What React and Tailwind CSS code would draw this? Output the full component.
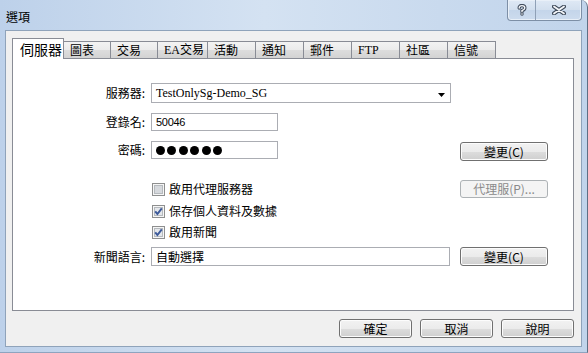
import React from "react";

const CJK = '"Noto Sans CJK TC", "Noto Sans", sans-serif';
const SERIF = '"Liberation Serif", "Noto Sans CJK TC", serif';

function Btn({ children, disabled, className = "" }) {
  return (
    <div
      className={`flex items-center justify-center rounded-[3px] border text-[12px] leading-none ${
        disabled
          ? "border-[#adb2b5] bg-[#f4f4f4] text-[#8a8a8a]"
          : "border-[#707070] bg-[linear-gradient(to_bottom,#f2f2f2_0%,#ebebeb_50%,#dddddd_51%,#cfcfcf_100%)] text-black shadow-[inset_0_0_0_1px_#fcfcfc]"
      } ${className}`}
    >
      {children}
    </div>
  );
}

function Check({ checked }) {
  return (
    <svg width="13" height="13" viewBox="0 0 13 13" className="shrink-0">
      <rect x="0.5" y="0.5" width="12" height="12" fill="#f6f6f6" stroke="#8e8f8f" />
      <rect x="2.5" y="2.5" width="8" height="8" fill={checked ? "#e4e7eb" : "#d6d9dd"} stroke="#b6babe" />
      {checked && (
        <path d="M3.2 6.4 L5.4 9 L9.8 3.4" fill="none" stroke="#3d5a9a" strokeWidth="2" strokeLinejoin="miter" />
      )}
    </svg>
  );
}

function Tab({ label, w, serif }) {
  return (
    <div
      className={`-ml-px mb-px flex h-[17px] items-center border border-b-0 border-[#898c95] bg-[linear-gradient(to_bottom,#f3f3f3_0%,#ebebeb_50%,#dddddd_51%,#d3d3d3_100%)] pl-[6px] text-[12px] leading-none text-black ${w}`}
      style={{ fontFamily: serif ? SERIF : CJK }}
    >
      {label}
    </div>
  );
}

export default function App() {
  return (
    <div
      className="relative flex h-[353px] w-[588px] flex-col overflow-hidden rounded-tr-[7px] border-r border-b border-r-[#5f6f84] border-b-[#8ea4bf] bg-[linear-gradient(to_right,#bdd1ea_0%,#d4e2f2_45%,#c9daee_75%,#c1d4eb_100%)]"
      style={{ fontFamily: CJK }}
    >
      {/* title bar */}
      <div className="flex h-[30px] items-center pl-[6px] pt-[4px] text-[12px] text-black">選項</div>

      {/* caption buttons */}
      <div className="absolute right-[5px] top-0 flex h-[21px] w-[75px] overflow-hidden rounded-b-[4px] border border-t-0 border-[#7d8fa6] bg-[linear-gradient(to_bottom,#dfe9f5_0%,#d2dfee_50%,#c4d5ea_51%,#cddcee_100%)] shadow-[inset_0_0_0_1px_#e9f0f8]">
        <div className="flex w-[28px] items-center justify-center border-r border-[#8fa0b6]">
          <svg width="10" height="12" viewBox="0 0 10 12">
            <path d="M2.2 4 Q2.2 1.6 5 1.6 Q7.8 1.6 7.8 4 Q7.8 5.6 5 6.6 L5 7.8" fill="none" stroke="#3e4a5a" strokeWidth="3.4" strokeLinecap="round" />
            <circle cx="5" cy="10" r="1.7" fill="#3e4a5a" />
            <path d="M2.2 4 Q2.2 1.6 5 1.6 Q7.8 1.6 7.8 4 Q7.8 5.6 5 6.6 L5 7.8" fill="none" stroke="#f4f6f9" strokeWidth="1.4" strokeLinecap="round" />
            <circle cx="5" cy="10" r="0.8" fill="#f4f6f9" />
          </svg>
        </div>
        <div className="flex flex-1 items-center justify-center">
          <svg width="14" height="10" viewBox="0 0 14 10">
            <path d="M2 1.5 L12 8.5 M12 1.5 L2 8.5" fill="none" stroke="#3e4a5a" strokeWidth="4" strokeLinecap="round" />
            <path d="M2 1.5 L12 8.5 M12 1.5 L2 8.5" fill="none" stroke="#f4f6f9" strokeWidth="1.8" strokeLinecap="round" />
          </svg>
        </div>
      </div>

      {/* client area */}
      <div className="ml-[5px] mr-[5px] flex h-[317px] flex-col border border-[#8fa3ba] bg-[#f0f0f0] pl-[6px] pr-[7px] pt-[7px]">
        {/* tabs */}
        <div className="relative z-10 -mb-px flex h-[21px] items-end">
          <div className="z-20 flex h-[21px] w-[52px] items-center border border-b-0 border-[#898c95] bg-white pb-[1px] pl-[7px] text-[14px] leading-none text-black">
            伺服器
          </div>
          <Tab label="圖表" w="w-[48px]" />
          <Tab label="交易" w="w-[48px]" />
          <Tab label="EA交易" w="w-[51px]" serif />
          <Tab label="活動" w="w-[49px]" />
          <Tab label="通知" w="w-[49px]" />
          <Tab label="郵件" w="w-[49px]" />
          <Tab label="FTP" w="w-[49px]" serif />
          <Tab label="社區" w="w-[49px]" />
          <Tab label="信號" w="w-[49px]" />
        </div>

        {/* panel */}
        <div className="flex h-[253px] flex-col border border-[#898c95] bg-white text-[12px] text-black">
          {/* server */}
          <div className="mt-[24px] flex h-[20px] items-center">
            <div className="w-[138px] pr-[6px] text-right">服務器:</div>
            <div className="relative flex h-[20px] w-[300px] items-center border border-[#abadb3] bg-white pl-[4px]">
              <span className="text-[12px]" style={{ fontFamily: SERIF }}>TestOnlySg-Demo_SG</span>
              <svg width="7" height="4" viewBox="0 0 7 4" className="absolute right-[5px] top-[9px]">
                <path d="M0 0 L7 0 L3.5 4 Z" fill="#000" />
              </svg>
            </div>
          </div>

          {/* login */}
          <div className="mt-[10px] flex h-[18px] items-center">
            <div className="w-[138px] pr-[6px] text-right">登錄名:</div>
            <div className="flex h-[18px] w-[127px] items-center border border-[#abadb3] bg-white pl-[4px]">
              <span className="text-[11px] tracking-[-0.3px]" style={{ fontFamily: '"Liberation Sans", sans-serif' }}>50046</span>
            </div>
          </div>

          {/* password */}
          <div className="mt-[10px] flex h-[20px] items-start">
            <div className="flex h-[18px] w-[138px] items-center justify-end pr-[6px]">密碼:</div>
            <div className="w-[309px]">
              <div className="flex h-[18px] w-[127px] items-center gap-[2.4px] border border-[#abadb3] bg-white pl-[4px]">
                <span className="h-[9px] w-[9px] rounded-full bg-black" />
                <span className="h-[9px] w-[9px] rounded-full bg-black" />
                <span className="h-[9px] w-[9px] rounded-full bg-black" />
                <span className="h-[9px] w-[9px] rounded-full bg-black" />
                <span className="h-[9px] w-[9px] rounded-full bg-black" />
                <span className="h-[9px] w-[9px] rounded-full bg-black" />
              </div>
            </div>
            <Btn className="mt-px h-[19px] w-[88px]">變更(C)</Btn>
          </div>

          {/* proxy */}
          <div className="mt-[19px] flex h-[18px] items-center">
            <div className="w-[138px]" />
            <div className="flex w-[309px] items-center gap-[4px] pl-px">
              <Check />
              <span>啟用代理服務器</span>
            </div>
            <Btn disabled className="h-[18px] w-[88px]">代理服(P)...</Btn>
          </div>

          <div className="mt-[5px] flex h-[16px] items-center">
            <div className="w-[138px]" />
            <div className="flex items-center gap-[4px] pl-px">
              <Check checked />
              <span>保存個人資料及數據</span>
            </div>
          </div>

          <div className="mt-[5px] flex h-[16px] items-center">
            <div className="w-[138px]" />
            <div className="flex items-center gap-[4px] pl-px">
              <Check checked />
              <span>啟用新聞</span>
            </div>
          </div>

          {/* news language */}
          <div className="mt-[7px] flex h-[19px] items-center">
            <div className="w-[138px] pr-[6px] text-right">新聞語言:</div>
            <div className="w-[309px]">
              <div className="flex h-[19px] w-[299px] items-center border border-[#abadb3] bg-white pl-[4px]">自動選擇</div>
            </div>
            <Btn className="h-[19px] w-[88px]">變更(C)</Btn>
          </div>
        </div>

        {/* bottom buttons */}
        <div className="mt-[8px] flex h-[19px] justify-end gap-[8px]">
          <Btn className="h-[19px] w-[73px]">確定</Btn>
          <Btn className="h-[19px] w-[73px]">取消</Btn>
          <Btn className="h-[19px] w-[73px]">說明</Btn>
        </div>
      </div>
    </div>
  );
}
